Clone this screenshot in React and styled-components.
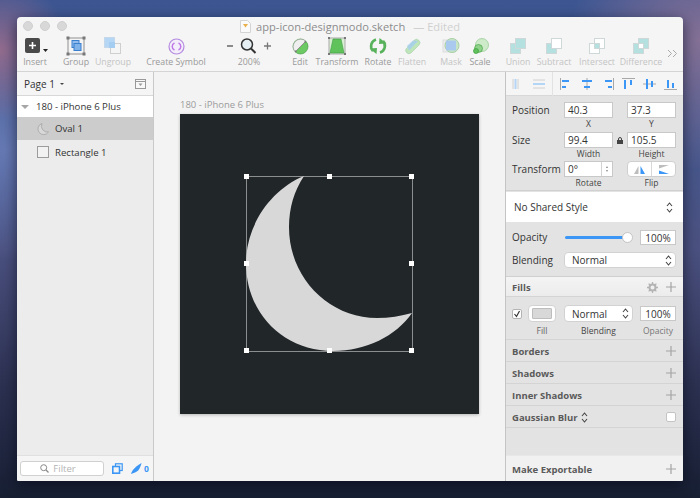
import React from "react";
import styled, { createGlobalStyle } from "styled-components";

const GlobalStyle = createGlobalStyle`
  html, body {
    margin: 0;
    padding: 0;
    overflow: hidden;
  }
  * {
    box-sizing: border-box;
  }
`;

const Desktop = styled.div`
  width: 700px;
  height: 498px;
  padding: 17px;
  font-family: "Open Sans", "DejaVu Sans", sans-serif;
  background:
    radial-gradient(circle at 0px 50px, rgba(160, 110, 140, 0.85) 0, rgba(160, 110, 140, 0) 70px),
    radial-gradient(circle at 700px 40px, rgba(140, 115, 150, 0.9) 0, rgba(140, 115, 150, 0) 130px),
    radial-gradient(circle at 5px 150px, rgba(110, 130, 190, 0.8) 0, rgba(110, 130, 190, 0) 110px),
    linear-gradient(180deg, #3d5692 0%, #44588f 25%, #4b5180 50%, #2b3050 78%, #171f33 100%);
`;

const Window = styled.div`
  width: 666px;
  height: 464px;
  display: flex;
  flex-direction: column;
  background: #f5f5f5;
  border-radius: 4px 4px 2px 2px;
  overflow: hidden;
  box-shadow: 0 4px 14px rgba(5, 8, 20, 0.6);
`;

const TitleBar = styled.div`
  position: relative;
  height: 18px;
  flex: none;
  display: flex;
  align-items: center;
  justify-content: center;
  gap: 5px;
  font-size: 11.1px;
  color: #8c8c8c;
`;

const Lights = styled.div`
  position: absolute;
  left: 6px;
  top: 4px;
  display: flex;
  gap: 7px;
`;

const Light = styled.span`
  width: 10px;
  height: 10px;
  border-radius: 50%;
  background: #d8d8d8;
  border: 1px solid #cfcfcf;
`;

const Edited = styled.span`
  color: #d0d0d0;
  margin-left: 3px;
`;

const Toolbar = styled.div`
  height: 37px;
  flex: none;
  display: flex;
  padding-left: 6px;
  border-bottom: 1px solid #d4d4d4;
`;

const ToolItem = styled.div`
  width: 24px;
  flex: none;
  margin-left: ${(props) => props.$gap || 0}px;
  display: flex;
  flex-direction: column;
  align-items: center;
  font-size: 8.8px;
  line-height: 10px;
  white-space: nowrap;
  color: ${(props) => (props.$dim ? "#c4c4c4" : "#9a9a9a")};
`;

const ToolIcon = styled.div`
  height: 22px;
  display: flex;
  align-items: center;
  justify-content: center;
`;

const More = styled.div`
  margin-left: 14px;
  margin-top: 6px;
`;

const Body = styled.div`
  flex: 1;
  display: flex;
  min-height: 0;
`;

const LeftPanel = styled.div`
  width: 137px;
  flex: none;
  display: flex;
  flex-direction: column;
  background: #ececec;
  border-right: 1px solid #c9c9c9;
  font-size: 9.6px;
  color: #333;
`;

const PageRow = styled.div`
  height: 24px;
  display: flex;
  align-items: center;
  justify-content: space-between;
  padding: 0 7px 0 7px;
  background: #f5f5f5;
  border-bottom: 1px solid #d8d8d8;
  font-size: 10px;
`;

const LayerRow = styled.div`
  height: ${(props) => props.$h}px;
  display: flex;
  align-items: center;
  gap: ${(props) => (props.$top ? 7 : 6)}px;
  padding-left: ${(props) => (props.$top ? 4 : 20)}px;
  background: ${(props) => props.$bg || "transparent"};
`;

const Triangle = styled.span`
  width: 0;
  height: 0;
  border-left: ${(props) => props.$s}px solid transparent;
  border-right: ${(props) => props.$s}px solid transparent;
  border-top: ${(props) => props.$s}px solid ${(props) => props.$c};
`;

const PageName = styled.span`
  display: flex;
  align-items: center;
  gap: 5px;
`;

const Spacer = styled.div`
  flex: 1;
`;

const FilterBar = styled.div`
  height: 26px;
  display: flex;
  align-items: center;
  padding-left: 3px;
  background: #f5f5f5;
  border-top: 1px solid #e0e0e0;
`;

const FilterBox = styled.div`
  width: 84px;
  height: 15px;
  margin-right: 8px;
  display: flex;
  align-items: center;
  justify-content: center;
  gap: 4px;
  padding-right: 8px;
  background: #fff;
  border: 1px solid #d0d0d0;
  border-radius: 3px;
  color: #b4b4b4;
  font-size: 9.5px;
`;

const FilterGap = styled.span`
  width: 8px;
`;

const BlueCount = styled.span`
  color: #3b96f5;
  font-size: 8.5px;
  font-weight: 700;
  margin-left: 2px;
`;

const Canvas = styled.div`
  flex: 1;
  padding: 27px 0 0 26px;
  background: #f3f3f3;
`;

const ArtboardLabel = styled.div`
  height: 15px;
  line-height: 11px;
  font-size: 9.5px;
  color: #9c9c9c;
`;

const Artboard = styled.div`
  position: relative;
  width: 299px;
  height: 300px;
  background: #212629;
  box-shadow: 0 1px 3px rgba(0, 0, 0, 0.25);
`;

const Selection = styled.div`
  position: absolute;
  left: 66px;
  top: 62px;
  width: 167px;
  height: 176px;
  border: 1px solid #8b8d8e;
`;

const MoonSvg = styled.svg`
  position: absolute;
  left: -1px;
  top: -1px;
`;

const Handle = styled.span`
  position: absolute;
  left: ${(props) => props.$x}%;
  top: ${(props) => props.$y}%;
  width: 5px;
  height: 5px;
  margin: -3px 0 0 -3px;
  background: #fff;
`;

const RightPanel = styled.div`
  width: 178px;
  flex: none;
  display: flex;
  flex-direction: column;
  background: #e3e3e3;
  border-left: 1px solid #c4c4c4;
  font-size: 9.5px;
  color: #333;
`;

const AlignBar = styled.div`
  height: 24px;
  flex: none;
  display: flex;
  align-items: center;
  gap: 5px;
  padding-left: 4px;
  background: #f5f5f5;
  border-bottom: 1px solid #d8d8d8;
`;

const AlignDivider = styled.span`
  width: 1px;
  height: 24px;
  background: #e2e2e2;
`;

const Geometry = styled.div`
  height: 95px;
  flex: none;
  padding: 6px 0 0 6px;
  border-bottom: 1px solid #d0d0d0;
`;

const FieldGrid = styled.div`
  display: grid;
  grid-template-columns: 52px 49px 14px 49px;
  align-items: center;
  align-content: start;
  height: ${(props) => props.$h}px;
`;

const RowLabel = styled.div`
  font-size: 10px;
  height: 16px;
  line-height: 16px;
`;

const Field = styled.div`
  height: 16px;
  padding-left: 3px;
  line-height: 15px;
  background: #fff;
  border: 1px solid #c8c8c8;
  font-size: 10px;
  color: #333;
`;

const Caption = styled.div`
  font-size: 8.5px;
  line-height: 11px;
  height: 11px;
  text-align: center;
  color: ${(props) => props.$c || "#444"};
  grid-column: ${(props) => props.$col || "auto"};
`;

const Lock = styled.div`
  display: flex;
  justify-content: center;
`;

const Stepper = styled.div`
  height: 16px;
  display: flex;
  background: #fff;
  border: 1px solid #c8c8c8;
  font-size: 10px;
  line-height: 15px;
`;

const StepperValue = styled.span`
  flex: 1;
  padding-left: 3px;
  border-right: 1px solid #d4d4d4;
`;

const StepperArrows = styled.span`
  width: 10px;
  display: flex;
  flex-direction: column;
  align-items: center;
  justify-content: center;
  gap: 2px;
`;

const TinyUp = styled.span`
  width: 0;
  height: 0;
  border-left: 1.5px solid transparent;
  border-right: 1.5px solid transparent;
  border-bottom: 2px solid #888;
`;

const TinyDown = styled(TinyUp)`
  border-bottom: 0;
  border-top: 2px solid #888;
`;

const FlipButton = styled.div`
  height: 16px;
  display: flex;
  background: #fff;
  border: 1px solid #cfcfcf;
  border-radius: 4px;
`;

const FlipSide = styled.span`
  flex: 1;
  display: flex;
  align-items: center;
  justify-content: center;
  border-left: ${(props) => (props.$split ? "1px solid #d8d8d8" : "0")};
`;

const SharedStyle = styled.div`
  height: 30px;
  flex: none;
  margin-top: 1px;
  display: flex;
  align-items: center;
  justify-content: space-between;
  padding: 0 10px 0 8px;
  background: #fff;
  font-size: 10px;
`;

const OpacitySection = styled.div`
  height: 55px;
  flex: none;
  padding: 7px 7px 0 6px;
  border-bottom: 1px solid #d0d0d0;
`;

const OpacityRow = styled.div`
  display: flex;
  align-items: center;
  height: 16px;
  margin-bottom: 7px;
`;

const RowName = styled.div`
  width: 52px;
  flex: none;
  font-size: 10px;
`;

const SliderTrack = styled.div`
  position: relative;
  width: 65px;
  height: 3px;
  margin: 0 11px 0 1px;
  background: #3b96f5;
  border-radius: 2px;
`;

const SliderKnob = styled.span`
  position: absolute;
  right: -4px;
  top: -4px;
  width: 11px;
  height: 11px;
  border-radius: 50%;
  background: #fff;
  border: 1px solid #c4c4c4;
`;

const PercentField = styled.div`
  width: 36px;
  height: 15px;
  flex: none;
  text-align: center;
  line-height: 14px;
  background: #fff;
  border: 1px solid #c8c8c8;
  font-size: 10px;
`;

const Select = styled.div`
  width: ${(props) => props.$w}px;
  height: ${(props) => props.$h || 16}px;
  flex: none;
  display: flex;
  align-items: center;
  justify-content: space-between;
  padding: 0 3px 0 7px;
  background: #fff;
  border: 1px solid #d2d2d2;
  border-radius: 4px;
  font-size: 10px;
`;

const SectionHead = styled.div`
  height: ${(props) => props.$h || 22}px;
  flex: none;
  display: flex;
  align-items: center;
  justify-content: space-between;
  padding: 1px 7px 0 6px;
  font-size: 9.5px;
  font-weight: 700;
  color: #5a5a5a;
  background: ${(props) => props.$bg || "transparent"};
  border-bottom: 1px solid #d4d4d4;
`;

const HeadTools = styled.div`
  display: flex;
  align-items: center;
  gap: 8px;
`;

const BlurName = styled.span`
  display: flex;
  align-items: center;
  gap: 3px;
`;

const WhiteCheck = styled.span`
  width: 10px;
  height: 10px;
  background: #fff;
  border: 1px solid #c4c4c4;
  border-radius: 2px;
`;

const FillSection = styled.div`
  height: 43px;
  flex: none;
  padding: 8px 0 0 6px;
  display: grid;
  grid-template-columns: 16px 36px 76px 36px;
  grid-template-rows: 17px 13px;
  align-items: center;
  justify-items: start;
  border-bottom: 1px solid #d4d4d4;
`;

const CheckBox = styled.div`
  width: 10px;
  height: 10px;
  display: flex;
  align-items: center;
  justify-content: center;
  background: #fff;
  border: 1px solid #b4b4b4;
  border-radius: 2px;
`;

const FillWell = styled.div`
  width: 28px;
  height: 17px;
  padding: 2px 3px;
  background: #fff;
  border: 1px solid #d2d2d2;
  border-radius: 4px;
`;

const FillSwatch = styled.div`
  height: 100%;
  background: #d8d8d8;
  border: 1px solid #bdbdbd;
  border-radius: 1px;
`;

const FillCaption = styled(Caption)`
  width: ${(props) => props.$w}px;
  margin-top: 4px;
`;

const Exportable = styled(SectionHead)`
  border-top: 1px solid #e8e8e8;
  border-bottom: 0;
`;

function InsertIcon() {
  return (
    <svg width="26" height="18" viewBox="-3 0 26 18">
      <rect x="0" y="1" width="15" height="15" rx="2" fill="#4a4a4a" />
      <path d="M7.5 5v7M4 8.5h7" stroke="#fff" strokeWidth="1.6" />
      <path d="M18 12h5l-2.500 3z" fill="#222" />
    </svg>
  );
}

function GroupIcon() {
  return (
    <svg width="20" height="20" viewBox="0 0 20 20">
      <rect x="2" y="2" width="16" height="16" fill="#f4f4f4" stroke="#8f8f8f" />
      <rect x="6" y="4.500" width="7" height="7" fill="#8fbcec" stroke="#3b7fcf" />
      <rect x="8" y="7.500" width="7" height="7" fill="#7fb2e8" stroke="#3b7fcf" />
      {[[2, 2], [18, 2], [2, 18], [18, 18]].map(([x, y]) => (
        <rect key={x + "-" + y} x={x - 1.5} y={y - 1.5} width="3" height="3" fill="#777" />
      ))}
    </svg>
  );
}

function UngroupIcon() {
  return (
    <svg width="20" height="20" viewBox="0 0 20 20">
      <rect x="1.500" y="1.500" width="10" height="10" fill="#b5d7f5" stroke="#c4d8ea" />
      <rect x="7.500" y="7.500" width="10" height="10" fill="none" stroke="#cfcfcf" />
      <rect x="6" y="6" width="6" height="6" fill="#a5cdf2" />
    </svg>
  );
}

function SymbolIcon() {
  return (
    <svg width="17" height="17" viewBox="0 0 17 17">
      <circle cx="8.500" cy="8.500" r="7.500" fill="#f3eefa" stroke="#b48be0" strokeWidth="1.2" />
      <path d="M6.500 12a3.800 3.800 0 0 1 0-7M10.500 5a3.800 3.800 0 0 1 0 7" fill="none" stroke="#c07ae8" strokeWidth="1.5" />
    </svg>
  );
}

function ZoomIcon() {
  return (
    <svg width="46" height="18" viewBox="0 0 46 18">
      <path d="M1 9h6" stroke="#666" strokeWidth="1.300" />
      <circle cx="21" cy="7.500" r="5.500" fill="#e4eef3" stroke="#333" strokeWidth="1.500" />
      <path d="M25 11.500l4.500 4.500" stroke="#333" strokeWidth="2" />
      <path d="M38 9h7M41.500 5.500v7" stroke="#777" strokeWidth="1.300" />
    </svg>
  );
}

function EditIcon() {
  return (
    <svg width="17" height="17" viewBox="0 0 17 17">
      <circle cx="8.500" cy="8.500" r="7.500" fill="#6cc964" stroke="#4c9e4a" strokeWidth=".7" />
      <path d="M13.800 3.200A7.500 7.500 0 0 0 3.200 13.800z" fill="#efefef" stroke="#a8a8a8" strokeWidth=".7" />
      <path d="M3 14L14 3" stroke="#8f8f8f" strokeWidth="1" />
      <path d="M12 3.500l2-.5v2zM3 12l2 2-2 .5z" fill="#777" />
    </svg>
  );
}

function TransformIcon() {
  return (
    <svg width="18" height="18" viewBox="0 0 18 18">
      <rect x="1" y="1" width="16" height="16" fill="#d8efd4" stroke="#aaa" />
      <path d="M5 2h8l3 14H2z" fill="#5fc25a" stroke="#3f9c44" strokeWidth=".6" />
      {[[1, 1], [17, 1], [1, 17], [17, 17]].map(([x, y]) => (
        <rect key={x + "-" + y} x={x - 1} y={y - 1} width="2" height="2" fill="#777" />
      ))}
    </svg>
  );
}

function RotateIcon() {
  return (
    <svg width="20" height="18" viewBox="0 0 20 18">
      <path d="M8 2.500A7 7 0 0 0 5 14" fill="none" stroke="#58b25c" strokeWidth="2.600" />
      <path d="M12 15.500A7 7 0 0 0 15 4" fill="none" stroke="#58b25c" strokeWidth="2.600" />
      <path d="M1.500 11.500L8.500 17l.5-6zM18.500 6.500L11.500 1l-.5 6z" fill="#58b25c" />
    </svg>
  );
}

function FlattenIcon() {
  return (
    <svg width="17" height="17" viewBox="0 0 17 17">
      <path d="M2 11L10 2.500a3.300 3.300 0 0 1 5 4.500L7 15a3.300 3.300 0 0 1-5-4z" fill="#bfe5bb" stroke="#a5cfa5" strokeWidth=".6" />
      <path d="M3 8L9 2.500l5 .5-9 9.500z" fill="#a5cdf0" opacity=".8" />
    </svg>
  );
}

function MaskIcon() {
  return (
    <svg width="18" height="18" viewBox="0 0 18 18">
      <rect x="1" y="3" width="12" height="12" fill="#ececec" stroke="#ddd" />
      <circle cx="10" cy="8.500" r="7" fill="#c8e6c5" stroke="#a8cfa8" />
      <rect x="4" y="3.500" width="10" height="10" rx="1" fill="#a9c9ee" />
    </svg>
  );
}

function ScaleIcon() {
  return (
    <svg width="17" height="17" viewBox="0 0 17 17">
      <circle cx="10" cy="7" r="6.500" fill="#cdebc9" stroke="#93c790" strokeWidth=".7" />
      <circle cx="6.500" cy="10.500" r="4" fill="#8fd38a" stroke="#4ea34e" strokeWidth=".7" />
      <circle cx="4" cy="13" r="2.500" fill="#5fc25a" stroke="#3f9c44" strokeWidth=".7" />
    </svg>
  );
}

function BoolIcon({ a, b, mid }) {
  return (
    <svg width="16" height="16" viewBox="0 0 16 16">
      <rect x=".5" y="5.500" width="10" height="10" fill={a} stroke="#cfd8d8" />
      <rect x="5.500" y=".5" width="10" height="10" fill={b} stroke="#cfd8d8" />
      {mid && <rect x="5.500" y="5.500" width="5" height="5" fill={mid} stroke="#cfd8d8" />}
    </svg>
  );
}

function AlignIcon({ d, bars, dim }) {
  return (
    <svg width="16" height="14" viewBox="0 0 16 14">
      <path d={d} stroke={dim ? "#d0d0d0" : "#a8a8a8"} strokeWidth="1" fill="none" />
      {bars.map(([x, y, w, h]) => (
        <rect key={x + "-" + y} x={x} y={y} width={w} height={h} fill={dim ? "#b4d6f6" : "#3b96f5"} />
      ))}
    </svg>
  );
}

const tools = [
  ["Insert", 0, false, <InsertIcon key="i" />],
  ["Group", 17, false, <GroupIcon key="i" />],
  ["Ungroup", 13, true, <UngroupIcon key="i" />],
  ["Create Symbol", 39, false, <SymbolIcon key="i" />],
  ["200%", 49, false, <ZoomIcon key="i" />],
  ["Edit", 27, false, <EditIcon key="i" />],
  ["Transform", 13, false, <TransformIcon key="i" />],
  ["Rotate", 17, false, <RotateIcon key="i" />],
  ["Flatten", 10, true, <FlattenIcon key="i" />],
  ["Mask", 15, true, <MaskIcon key="i" />],
  ["Scale", 5, false, <ScaleIcon key="i" />],
  ["Union", 14, true, <BoolIcon key="i" a="#b5e0e0" b="#b5e0e0" />],
  ["Subtract", 12, true, <BoolIcon key="i" a="#b5e0e0" b="#fff" />],
  ["Intersect", 19, true, <BoolIcon key="i" a="#fff" b="#fff" mid="#b5e0e0" />],
  ["Difference", 20, true, <BoolIcon key="i" a="#b5e0e0" b="#b5e0e0" mid="#fff" />],
];

const aligns = [
  { d: "M2.500 1v12", bars: [[4, 3, 7, 2], [4, 9, 4, 2]] },
  { d: "M8 1v12", bars: [[3, 3, 10, 2], [5, 9, 6, 2]] },
  { d: "M13.500 1v12", bars: [[5, 3, 7, 2], [8, 9, 4, 2]] },
  { d: "M1 1.500h13", bars: [[3, 3, 2, 9], [9, 3, 2, 5]] },
  { d: "M1 7h13", bars: [[4, 2, 2, 10], [9, 4, 2, 6]] },
  { d: "M1 12.500h13", bars: [[4, 3, 2, 8], [9, 6, 2, 5]] },
];

function Plus() {
  return (
    <svg width="10" height="10" viewBox="0 0 10 10">
      <path d="M5 0v10M0 5h10" stroke="#a4a4a4" strokeWidth="1.200" />
    </svg>
  );
}

function Chevrons({ c = "#444" }) {
  return (
    <svg width="7" height="11" viewBox="0 0 7 11">
      <path d="M1 4l2.500-3L6 4M1 7l2.500 3L6 7" fill="none" stroke={c} strokeWidth="1.100" />
    </svg>
  );
}

const handles = [
  [0, 0], [50, 0], [100, 0],
  [0, 50], [100, 50],
  [0, 100], [50, 100], [100, 100],
];

const headers = ["Borders", "Shadows", "Inner Shadows"];

const App = () => {
  return (
    <Desktop>
      <GlobalStyle />
      <Window>
        <TitleBar>
          <Lights>
            <Light />
            <Light />
            <Light />
          </Lights>
          <svg width="11" height="13" viewBox="0 0 11 13">
            <path d="M.5.5h7l3 3v9H.5z" fill="#fafafa" stroke="#d4d4d4" />
            <path d="M3 4h5l-2.500 3.500z" fill="#e8b04a" />
          </svg>
          <span>app-icon-designmodo.sketch</span>
          <Edited>— Edited</Edited>
        </TitleBar>
        <Toolbar>
          {tools.map(([label, gap, dim, icon]) => (
            <ToolItem key={label} $gap={gap} $dim={dim}>
              <ToolIcon>{icon}</ToolIcon>
              {label}
            </ToolItem>
          ))}
          <More>
            <svg width="11" height="9" viewBox="0 0 11 9">
              <path d="M1 1l3.500 3.500L1 8M6 1l3.500 3.500L6 8" fill="none" stroke="#aaa" strokeWidth="1" />
            </svg>
          </More>
        </Toolbar>
        <Body>
          <LeftPanel>
            <PageRow>
              <PageName>
                Page 1
                <Triangle $s={2.5} $c="#444" />
              </PageName>
              <svg width="11" height="10" viewBox="0 0 11 10">
                <rect x=".5" y=".5" width="10" height="9" fill="#f8f8f8" stroke="#999" />
                <path d="M0 2.500h11" stroke="#999" />
                <path d="M3.500 4.500h4l-2 2.500z" fill="#999" />
              </svg>
            </PageRow>
            <LayerRow $h={21} $bg="#fff" $top>
              <Triangle $s={4.5} $c="#a6a6a6" />
              180 - iPhone 6 Plus
            </LayerRow>
            <LayerRow $h={23} $bg="#cccccc">
              <svg width="12" height="12" viewBox="0 0 12 12">
                <path d="M5 .5A5.700 5.700 0 1 0 11.500 9A6 6 0 0 1 5 .5z" fill="#d8d8d8" stroke="#a4a4a4" strokeWidth=".8" />
              </svg>
              Oval 1
            </LayerRow>
            <LayerRow $h={24}>
              <svg width="12" height="12" viewBox="0 0 12 12">
                <rect x=".5" y=".5" width="11" height="11" fill="#f2f2f2" stroke="#9c9c9c" />
              </svg>
              Rectangle 1
            </LayerRow>
            <Spacer />
            <FilterBar>
              <FilterBox>
                <svg width="9" height="9" viewBox="0 0 9 9">
                  <circle cx="3.700" cy="3.700" r="3" fill="none" stroke="#888" />
                  <path d="M6 6l2.500 2.500" stroke="#888" strokeWidth="1.200" />
                </svg>
                Filter
              </FilterBox>
              <svg width="11" height="11" viewBox="0 0 11 11">
                <rect x="3.500" y=".8" width="6.700" height="6.700" fill="none" stroke="#3b96f5" strokeWidth="1.200" />
                <rect x=".8" y="3.500" width="6.700" height="6.700" fill="#f5f5f5" stroke="#3b96f5" strokeWidth="1.600" />
              </svg>
              <FilterGap />
              <svg width="11" height="11" viewBox="0 0 11 11">
                <path d="M0 11C1 7 5 3 10.500 0C9.500 4 8 8 4 9.500z" fill="#3b96f5" />
              </svg>
              <BlueCount>0</BlueCount>
            </FilterBar>
          </LeftPanel>
          <Canvas>
            <ArtboardLabel>180 - iPhone 6 Plus</ArtboardLabel>
            <Artboard>
              <Selection>
                <MoonSvg width="167" height="176" viewBox="0 0 167 176">
                  <path
                    d="M58 0C24 14 0 50 0 87C0 138 38 175 87 175C120 175 150 160 166 137C155 140 143 142 131 142C83 142 43 102 43 51C43 32 48 15 58 0Z"
                    fill="#d8d8d8"
                  />
                </MoonSvg>
                {handles.map(([x, y]) => (
                  <Handle key={x + "-" + y} $x={x} $y={y} />
                ))}
              </Selection>
            </Artboard>
          </Canvas>
          <RightPanel>
            <AlignBar>
              <AlignIcon dim d="M3 2v10M8 2v10" bars={[[4.500, 2, 2, 10]]} />
              <AlignIcon dim d="M2 3h12M2 11h12" bars={[[2, 6, 12, 2]]} />
              <AlignDivider />
              {aligns.map((a) => (
                <AlignIcon key={a.d} d={a.d} bars={a.bars} />
              ))}
            </AlignBar>
            <Geometry>
              <FieldGrid $h={30}>
                <RowLabel>Position</RowLabel>
                <Field>40.3</Field>
                <span />
                <Field>37.3</Field>
                <Caption $col="2">X</Caption>
                <Caption $col="4">Y</Caption>
              </FieldGrid>
              <FieldGrid $h={29}>
                <RowLabel>Size</RowLabel>
                <Field>99.4</Field>
                <Lock>
                  <svg width="6" height="7" viewBox="0 0 6 7">
                    <path d="M1.500 3V2a1.500 1.500 0 0 1 3 0v1" fill="none" stroke="#444" />
                    <rect x="0" y="3" width="6" height="4" fill="#444" />
                  </svg>
                </Lock>
                <Field>105.5</Field>
                <Caption $col="2">Width</Caption>
                <Caption $col="4">Height</Caption>
              </FieldGrid>
              <FieldGrid $h={29}>
                <RowLabel>Transform</RowLabel>
                <Stepper>
                  <StepperValue>0°</StepperValue>
                  <StepperArrows>
                    <TinyUp />
                    <TinyDown />
                  </StepperArrows>
                </Stepper>
                <span />
                <FlipButton>
                  <FlipSide>
                    <svg width="13" height="9" viewBox="0 0 13 9">
                      <path d="M5.500 1v8H1z" fill="#bdbdbd" />
                      <path d="M7.500 1v8H12z" fill="#3b96f5" />
                    </svg>
                  </FlipSide>
                  <FlipSide $split>
                    <svg width="12" height="11" viewBox="0 0 12 11">
                      <path d="M1 1h10L1 4.500z" fill="#bdbdbd" />
                      <path d="M1 10h10L1 6.500z" fill="#3b96f5" />
                    </svg>
                  </FlipSide>
                </FlipButton>
                <Caption $col="2">Rotate</Caption>
                <Caption $col="4">Flip</Caption>
              </FieldGrid>
            </Geometry>
            <SharedStyle>
              No Shared Style
              <Chevrons />
            </SharedStyle>
            <OpacitySection>
              <OpacityRow>
                <RowName>Opacity</RowName>
                <SliderTrack>
                  <SliderKnob />
                </SliderTrack>
                <PercentField>100%</PercentField>
              </OpacityRow>
              <OpacityRow>
                <RowName>Blending</RowName>
                <Select $w={112}>
                  Normal
                  <Chevrons />
                </Select>
              </OpacityRow>
            </OpacitySection>
            <SectionHead $bg="linear-gradient(#f4f4f4, #ececec)" $h={20}>
              Fills
              <HeadTools>
                <svg width="11" height="11" viewBox="0 0 11 11">
                  <circle cx="5.500" cy="5.500" r="3" fill="none" stroke="#b4b4b4" strokeWidth="2" />
                  <path d="M5.500 0v2M5.500 9v2M0 5.500h2M9 5.500h2M1.600 1.600L3 3M8 8l1.400 1.400M9.400 1.600L8 3M3 8L1.600 9.400" stroke="#b4b4b4" strokeWidth="1.300" />
                </svg>
                <Plus />
              </HeadTools>
            </SectionHead>
            <FillSection>
              <CheckBox>
                <svg width="8" height="8" viewBox="0 0 8 8">
                  <path d="M1.500 4l2 2.500L6.500 1" fill="none" stroke="#333" strokeWidth="1.200" />
                </svg>
              </CheckBox>
              <FillWell>
                <FillSwatch />
              </FillWell>
              <Select $w={69} $h={17}>
                Normal
                <Chevrons />
              </Select>
              <PercentField>100%</PercentField>
              <FillCaption $col="2" $w={28} $c="#666">Fill</FillCaption>
              <FillCaption $col="3" $w={69}>Blending</FillCaption>
              <FillCaption $col="4" $w={36} $c="#777">Opacity</FillCaption>
            </FillSection>
            {headers.map((h) => (
              <SectionHead key={h}>
                {h}
                <Plus />
              </SectionHead>
            ))}
            <SectionHead>
              <BlurName>
                Gaussian Blur
                <Chevrons />
              </BlurName>
              <WhiteCheck />
            </SectionHead>
            <Spacer />
            <Exportable $bg="#f1f1f1" $h={26}>
              Make Exportable
              <Plus />
            </Exportable>
          </RightPanel>
        </Body>
      </Window>
    </Desktop>
  );
};

export default App;
